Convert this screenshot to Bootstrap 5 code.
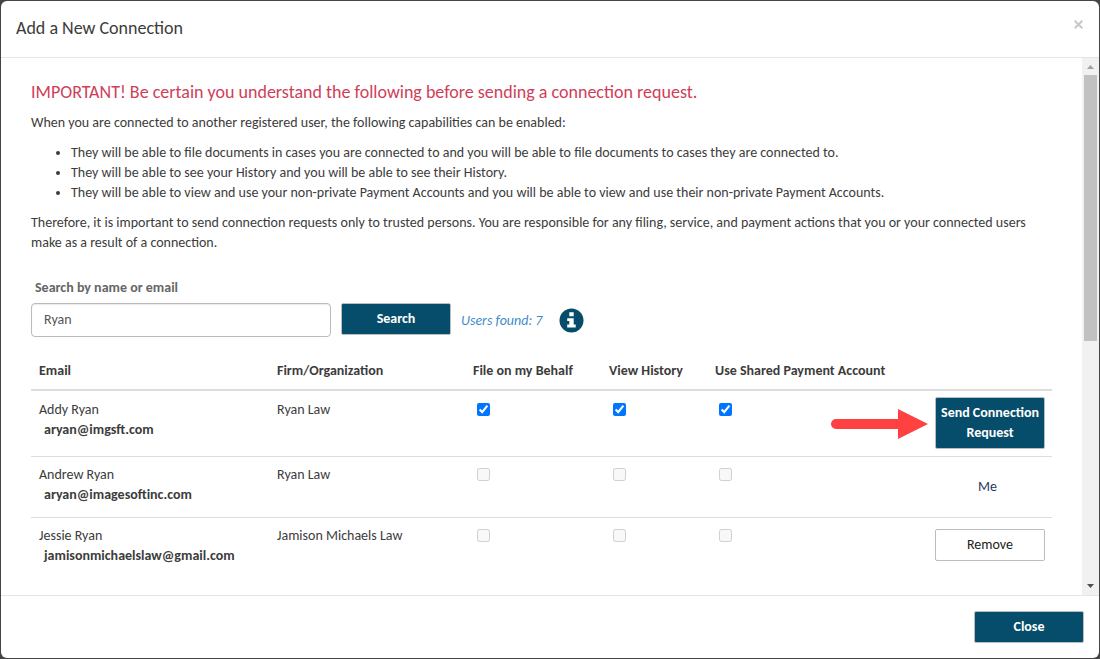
<!DOCTYPE html>
<html lang="en">
<head>
<meta charset="utf-8">
<meta name="viewport" content="width=device-width, initial-scale=1">
<title>Add a New Connection</title>
<link href="https://cdn.jsdelivr.net/npm/bootstrap@5.3.0/dist/css/bootstrap.min.css" rel="stylesheet">
<style>
  body { background: #454545; color: #3c3c3c; font: 14px/20px Carlito, Calibri, Lato, sans-serif; padding: 1px; }
  .modal-content { height: calc(100vh - 2px); background: #fff; border: 0; border-radius: 6px; overflow: hidden; color: #3c3c3c; }
  .modal-header { padding: 14px 15px; min-height: 57px; border-bottom: 1px solid #e5e5e5; border-radius: 0; align-items: flex-start; }
  .modal-title { font-size: 18px; line-height: 26px; font-weight: 400; }
  .dismiss { border: 0; background: none; padding: 0; width: 12px; height: 18px; display: flex; align-items: center; justify-content: center; }
  .modal-footer { padding: 15px; border-top: 1px solid #e5e5e5; }
  .modal-footer > * { margin: 0; }
  .scroll-pane { padding: 23px 30px 0; }
  .notice { color: #cf3e58; font-size: 18px; line-height: 22px; margin-bottom: 10px; }
  .pane-text { margin-bottom: 10px; }
  .pane-list { padding-left: 40px; margin-bottom: 10px; }
  .field-label { color: #666; font-weight: 700; margin: 25px 0 5px 4px; }
  .search-row { gap: 10px; }
  .search-box { width: 300px; height: 34px; font-size: 14px; line-height: 20px; color: #555; border: 1px solid #bbb; border-radius: 4px; padding: 5px 12px 7px; box-shadow: inset 0 1px 1px rgba(0,0,0,.08); }
  .action { width: 110px; min-height: 32px; border: 1px solid #b9bdc0; border-radius: 2px; padding: 5px 4px; font-size: 14px; line-height: 20px; background: #fff; color: #222; }
  .action-main { background: #054d6a; color: #fff; font-weight: 700; }
  .found { color: #428bca; font-style: italic; padding: 2px 7px 0 0; }
  .people { table-layout: fixed; margin: 24px 0 0; width: 100%; border-collapse: separate; border-spacing: 0; }
  .people th { padding: 0 8px 8px; border-bottom: 2px solid #ddd; font-weight: 700; white-space: nowrap; }
  .people td { padding: 9px 8px 12px; border-bottom: 1px solid #ddd; vertical-align: top; }
  .people tr + tr td { padding-top: 8px; }
  .people tr:last-child td { border: 0; }
  .people td:last-child { padding: 6px 7px 7px 8px; position: relative; text-align: center; }
  .people tr:last-child td:last-child { padding-top: 11px; }
  .people input { display: block; width: 13px; height: 13px; margin: 3px 0 0 4px; }
  .mail { font-weight: 700; padding-left: 5px; }
  .me { color: #1f3864; margin-top: 14px; padding-right: 5px; }
  .pointer { position: absolute; right: 124px; top: 18px; }
  .track { width: 17px; background: #f1f1f1; padding: 0 2px; }
  .track svg { margin-left: -2px; flex: none; }
  .thumb { background: #c1c1c1; height: 49.5%; }
</style>
</head>
<body>
<main class="modal-content d-flex flex-column" role="dialog" aria-labelledby="dialogTitle">
  <header class="modal-header">
    <h1 class="modal-title" id="dialogTitle">Add a New Connection</h1>
    <button class="dismiss" type="button" aria-label="Close dialog">
      <svg width="9" height="9" viewBox="0 0 9 9" stroke="#c8c8c8" stroke-width="2"><path d="M.7.7 8.3 8.3M8.3.7.7 8.3"/></svg>
    </button>
  </header>

  <div class="d-flex flex-grow-1 overflow-hidden">
    <section class="scroll-pane flex-grow-1">
      <h2 class="notice fw-normal">IMPORTANT! Be certain you understand the following before sending a connection request.</h2>
      <p class="pane-text">When you are connected to another registered user, the following capabilities can be enabled:</p>
      <ul class="pane-list">
        <li>They will be able to file documents in cases you are connected to and you will be able to file documents to cases they are connected to.</li>
        <li>They will be able to see your History and you will be able to see their History.</li>
        <li>They will be able to view and use your non-private Payment Accounts and you will be able to view and use their non-private Payment Accounts.</li>
      </ul>
      <p class="pane-text">Therefore, it is important to send connection requests only to trusted persons. You are responsible for any filing, service, and payment actions that you or your connected users make as a result of a connection.</p>

      <form>
        <label class="field-label d-block" for="person">Search by name or email</label>
        <div class="search-row d-flex align-items-center">
          <input class="search-box form-control" id="person" type="text" value="Ryan">
          <button class="action action-main align-self-start" type="button">Search</button>
          <span class="found">Users found: 7</span>
          <svg width="25" height="25" viewBox="0 0 25 25" role="img" aria-label="Information"><circle cx="12.5" cy="12.5" r="12" fill="#054d6a"/><path fill="#fff" d="M10.300 4.300h4.400v4h-4.400zM8.200 10.200h6.500v6.300h2v2.900H8.200v-2.900h2.100v-3.400H8.200z"/></svg>
        </div>
      </form>

      <table class="people">
        <colgroup><col style="width:238px"><col style="width:196px"><col style="width:136px"><col style="width:106px"><col style="width:220px"><col style="width:125px"></colgroup>
        <thead>
          <tr><th>Email</th><th>Firm/Organization</th><th>File on my Behalf</th><th>View History</th><th>Use Shared Payment Account</th><th aria-label="Action"></th></tr>
        </thead>
        <tbody>
          <tr>
            <td><div>Addy Ryan</div><div class="mail">aryan@imgsft.com</div></td>
            <td>Ryan Law</td>
            <td><input type="checkbox" checked aria-label="File on my behalf, Addy Ryan"></td>
            <td><input type="checkbox" checked aria-label="View history, Addy Ryan"></td>
            <td><input type="checkbox" checked aria-label="Use shared payment account, Addy Ryan"></td>
            <td>
              <svg class="pointer" width="97" height="30" viewBox="0 0 97 30" fill="#ff4141" aria-hidden="true"><path d="M5 10H67V0L97 15 67 30V20H5A5 5 0 0 1 5 10Z"/></svg>
              <button class="action action-main" type="button">Send Connection Request</button>
            </td>
          </tr>
          <tr>
            <td><div>Andrew Ryan</div><div class="mail">aryan@imagesoftinc.com</div></td>
            <td>Ryan Law</td>
            <td><input type="checkbox" disabled aria-label="File on my behalf, Andrew Ryan"></td>
            <td><input type="checkbox" disabled aria-label="View history, Andrew Ryan"></td>
            <td><input type="checkbox" disabled aria-label="Use shared payment account, Andrew Ryan"></td>
            <td><div class="me">Me</div></td>
          </tr>
          <tr>
            <td><div>Jessie Ryan</div><div class="mail">jamisonmichaelslaw@gmail.com</div></td>
            <td>Jamison Michaels Law</td>
            <td><input type="checkbox" disabled aria-label="File on my behalf, Jessie Ryan"></td>
            <td><input type="checkbox" disabled aria-label="View history, Jessie Ryan"></td>
            <td><input type="checkbox" disabled aria-label="Use shared payment account, Jessie Ryan"></td>
            <td><button class="action" type="button">Remove</button></td>
          </tr>
        </tbody>
      </table>
    </section>
    <div class="track d-flex flex-column flex-shrink-0" aria-hidden="true">
      <svg width="17" height="17" viewBox="0 0 17 17" fill="#a3a3a3"><path d="M5 11h7L8.500 7z"/></svg>
      <div class="thumb"></div>
      <svg class="mt-auto" width="17" height="17" viewBox="0 0 17 17" fill="#505050"><path d="M5 6h7L8.500 10z"/></svg>
    </div>
  </div>

  <footer class="modal-footer">
    <button class="action action-main" type="button">Close</button>
  </footer>
</main>
<script src="https://cdn.jsdelivr.net/npm/bootstrap@5.3.0/dist/js/bootstrap.bundle.min.js"></script>
</body>
</html>
